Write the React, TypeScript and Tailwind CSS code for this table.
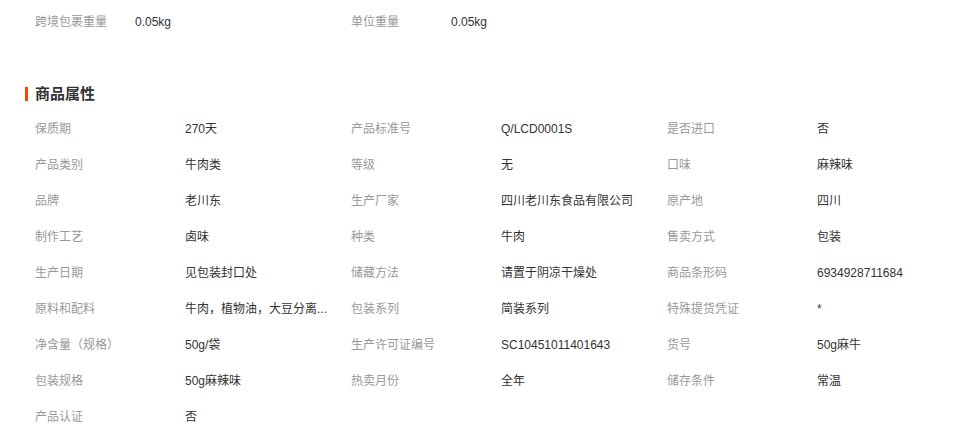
const weights = [
  { label: "跨境包裹重量", value: "0.05kg" },
  { label: "单位重量", value: "0.05kg" },
];

const attrs = [
  { label: "保质期", value: "270天" },
  { label: "产品标准号", value: "Q/LCD0001S" },
  { label: "是否进口", value: "否" },
  { label: "产品类别", value: "牛肉类" },
  { label: "等级", value: "无" },
  { label: "口味", value: "麻辣味" },
  { label: "品牌", value: "老川东" },
  { label: "生产厂家", value: "四川老川东食品有限公司" },
  { label: "原产地", value: "四川" },
  { label: "制作工艺", value: "卤味" },
  { label: "种类", value: "牛肉" },
  { label: "售卖方式", value: "包装" },
  { label: "生产日期", value: "见包装封口处" },
  { label: "储藏方法", value: "请置于阴凉干燥处" },
  { label: "商品条形码", value: "6934928711684" },
  // shown already shortened, like the page does
  { label: "原料和配料", value: "牛肉，植物油，大豆分离..." },
  { label: "包装系列", value: "简装系列" },
  { label: "特殊提货凭证", value: "*" },
  { label: "净含量（规格）", value: "50g/袋" },
  { label: "生产许可证编号", value: "SC10451011401643" },
  { label: "货号", value: "50g麻牛" },
  { label: "包装规格", value: "50g麻辣味" },
  { label: "热卖月份", value: "全年" },
  { label: "储存条件", value: "常温" },
  { label: "产品认证", value: "否" },
];

export default function App() {
  return (
    <div className="h-[428px] w-[953px] overflow-hidden bg-white font-['Liberation_Sans','Noto_Sans_CJK_SC',sans-serif] text-[12px] leading-[16px]">
      {/* weight row */}
      <div className="flex pl-[35px] pt-[4px]">
        {weights.map((w) => (
          <div key={w.label} className="flex h-[36px] w-[316px] items-center">
            <span className="w-[100px] text-[#999]">{w.label}</span>
            <span className="text-[#333]">{w.value}</span>
          </div>
        ))}
      </div>

      {/* section title */}
      <div className="mt-[44px] flex h-[20px] items-center pl-[25px]">
        <span className="mr-[7px] h-[14px] w-[3px] bg-[#ff4400]" />
        <span className="text-[15px] font-bold text-[#333]">商品属性</span>
      </div>

      <div className="mt-[7px] grid w-[983px] grid-cols-3 pl-[35px]">
        {attrs.map((a) => (
          <div key={a.label} className="flex h-[36px] items-center">
            <span className="w-[150px] shrink-0 text-[#999]">{a.label}</span>
            <span className="w-[160px] truncate text-[#333]">{a.value}</span>
          </div>
        ))}
      </div>
    </div>
  );
}
